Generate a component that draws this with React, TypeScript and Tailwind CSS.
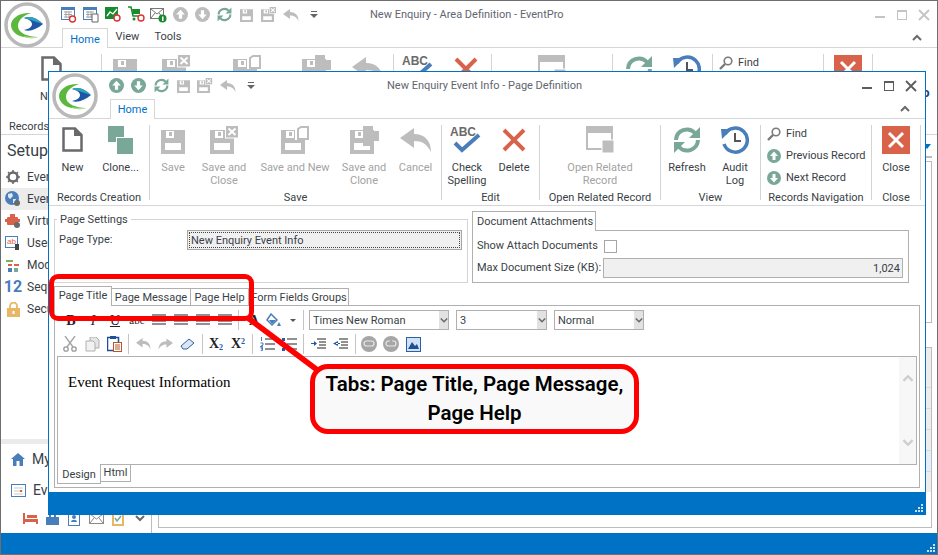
import React from "react";

const GREY = "#bdbdbd";
const TEAL = "#7aa898";
const RED = "#d9634a";
const BLUE = "#4a7ebb";

function Logo() {
  return (
    <svg width="46" height="46" viewBox="0 0 46 46" className="block">
      <circle cx="23" cy="23" r="21" fill="#fff" stroke="#b9b9b9" strokeWidth="3.5" />
      <path d="M27 11C16 10 7 16 7 23C7 32 19 38 34 35C24 35 14 31 14 24C14 18 20 13 27 11Z" fill="#5cb83c" />
      <path d="M19 34C24 37 30 37 34 35C28 35 23 35 19 34Z" fill="#b5dd9f" />
      <path d="M20 16C27 13 34 17 39 22C33 27 26 30 20 28C25 27 28 25 28 22C28 19 24 17 20 16Z" fill="#1f56a6" />
      <path d="M20 16C27 13 34 17 39 22C33 20 27 18 20 16Z" fill="#2fa6b8" />
    </svg>
  );
}

function Floppy({ size = 24, kind = "plain", color = GREY }: { size?: number; kind?: string; color?: string }) {
  const w = kind === "plain" ? 24 : 29;
  return (
    <svg width={(size * w) / 24} height={(size * 28) / 24} viewBox={`0 -4 ${w} 28`} className="block">
      <path fillRule="evenodd" fill={color} d="M0 0H24V24H0ZM5 1V8H13V1ZM4 13V20H20V13Z" />
      <rect x="8" y="2" width="3" height="4" fill={color} />
      {kind === "x" && (
        <g>
          <rect x="15" y="-4.500" width="14" height="13" fill="#fff" />
          <rect x="16" y="-4" width="12" height="11.500" fill={color} />
          <path d="M18.500 -1.500L25.500 5M25.500 -1.500L18.500 5" stroke="#fff" strokeWidth="2" />
        </g>
      )}
      {kind === "doc" && (
        <g>
          <path d="M14 10V-4H29V10Z" fill="#fff" />
          <path d="M17 9V-1L20 -3H27V9Z" fill="#fff" stroke={color} strokeWidth="2" />
        </g>
      )}
      {kind === "plus" && <path d="M13 -4H23V1H29V11H23V16H13V11H19V1H13Z" fill={color} />}
    </svg>
  );
}

function ReplyArrow({ size = 32, color = GREY }: { size?: number; color?: string }) {
  return (
    <svg width={size} height={(size * 24) / 32} viewBox="0 0 32 24" className="block">
      <path d="M14 0L0 10L14 20V13C22 13 27 16 31 24C31 13 25 6 14 6Z" fill={color} />
    </svg>
  );
}

function PageIcon() {
  return (
    <svg width="21" height="25" viewBox="0 0 21 25" className="block">
      <path d="M1.5 1.5H13L19.5 8V23.5H1.5Z" fill="#fff" stroke="#6a6a6a" strokeWidth="2.5" />
      <path d="M12 1L20 9H12Z" fill="#6a6a6a" />
    </svg>
  );
}

function CloneIcon() {
  return (
    <svg width="25" height="28" viewBox="0 0 25 28" className="block">
      <rect x="0" y="0" width="16" height="16" fill={TEAL} />
      <rect x="8" y="11" width="17" height="17" fill="#fff" />
      <rect x="9" y="12" width="16" height="16" fill={TEAL} />
    </svg>
  );
}

function SpellIcon() {
  return (
    <svg width="34" height="28" viewBox="0 0 34 28" className="block">
      <text x="0" y="10" fontFamily="'Liberation Sans',sans-serif" fontWeight="700" fontSize="12" fill="#6a6a6a">ABC</text>
      <path d="M5 17L12 24L29 9" fill="none" stroke={BLUE} strokeWidth="4" />
    </svg>
  );
}

function DeleteIcon() {
  return (
    <svg width="24" height="24" viewBox="0 0 24 24" className="block">
      <path d="M2 2L22 22M22 2L2 22" stroke={RED} strokeWidth="4" />
    </svg>
  );
}

function RelatedIcon() {
  return (
    <svg width="28" height="27" viewBox="0 0 28 27" className="block">
      <rect x="1" y="1" width="25" height="22" fill="#fff" stroke={GREY} strokeWidth="2" />
      <rect x="0" y="0" width="27" height="7" fill={GREY} />
      <rect x="16" y="14" width="12" height="13" fill={GREY} stroke="#fff" />
    </svg>
  );
}

function RefreshIcon({ size = 28, color = TEAL }: { size?: number; color?: string }) {
  return (
    <svg width={size} height={size} viewBox="0 0 28 28" className="block">
      <path d="M3 14A11 11 0 0 1 22 7" fill="none" stroke={color} strokeWidth="4" />
      <path d="M27 1V12H16Z" fill={color} />
      <path d="M25 14A11 11 0 0 1 6 21" fill="none" stroke={color} strokeWidth="4" />
      <path d="M1 27V16H12Z" fill={color} />
    </svg>
  );
}

function AuditIcon() {
  return (
    <svg width="28" height="28" viewBox="0 0 28 28" className="block">
      <path d="M4 8A12 12 0 1 1 3 18" fill="none" stroke={BLUE} strokeWidth="3.5" />
      <path d="M0 3L11 3L1 13Z" fill={BLUE} />
      <path d="M14 7V15H20" fill="none" stroke="#555" strokeWidth="2" />
    </svg>
  );
}

function SearchIcon() {
  return (
    <svg width="14" height="14" viewBox="0 0 14 14" className="block">
      <circle cx="9" cy="5" r="3.8" fill="none" stroke="#7a7a7a" strokeWidth="1.6" />
      <path d="M6 8L1 13" stroke="#7a7a7a" strokeWidth="2.4" />
    </svg>
  );
}

function CircleArrow({ dir, size = 14, color = TEAL }: { dir: "up" | "down"; size?: number; color?: string }) {
  return (
    <svg width={size} height={size} viewBox="0 0 14 14" className="block">
      <circle cx="7" cy="7" r="7" fill={color} />
      <path d={dir === "up" ? "M7 2.5L11 7H8.5V11H5.5V7H3Z" : "M7 11.5L11 7H8.5V3H5.5V7H3Z"} fill="#fff" />
    </svg>
  );
}

function CloseBox() {
  return (
    <svg width="28" height="28" viewBox="0 0 28 28" className="block">
      <rect width="28" height="28" fill={RED} />
      <path d="M7 7L21 21M21 7L7 21" stroke="#fff" strokeWidth="3" />
    </svg>
  );
}

function Chevron({ up = false, className = "", color = "#6a6a6a" }: { up?: boolean; className?: string; color?: string }) {
  return (
    <svg width="10" height="7" viewBox="0 0 10 7" className={className}>
      <path d={up ? "M1 6L5 2L9 6" : "M1 1L5 5L9 1"} fill="none" stroke={color} strokeWidth="2" />
    </svg>
  );
}

function QatDrop() {
  return (
    <svg width="8" height="7" viewBox="0 0 8 7" className="block">
      <rect x="1" y="0" width="6" height="1" fill="#666" />
      <path d="M0 3H8L4 7Z" fill="#666" />
    </svg>
  );
}

function CalendarClock({ form = false }: { form?: boolean }) {
  return (
    <svg width="16" height="17" viewBox="0 0 16 17" className="block">
      <rect x="0.5" y="1.5" width="13" height="12" fill="#fff" stroke={BLUE} />
      <rect x="0" y="1" width="14" height="3" fill={BLUE} />
      <path d="M3 6H11M3 8.500H11M3 11H11M5 5V12M8 5V12" stroke="#a5a5a5" />
      {form ? (
        <path d="M9 8H15V16H9Z" fill="#fff" stroke="#666" />
      ) : (
        <circle cx="11.500" cy="13" r="3" fill="#fff" stroke="#d33" strokeWidth="1.400" />
      )}
    </svg>
  );
}

function GreenChartClock() {
  return (
    <svg width="18" height="17" viewBox="0 0 18 17" className="block">
      <rect x="0" y="1" width="13" height="12" fill="#1a8a2e" />
      <path d="M2 10L5 6L8 8L12 3" fill="none" stroke="#fff" strokeWidth="1.300" />
      <circle cx="12" cy="12" r="3" fill="#fff" stroke="#d33" strokeWidth="1.400" />
    </svg>
  );
}

function CartClock() {
  return (
    <svg width="18" height="17" viewBox="0 0 18 17" className="block">
      <path d="M0 1H3L5 10H12" fill="none" stroke="#1a8a2e" strokeWidth="1.500" />
      <path d="M4 3H12V8H5Z" fill="#1a8a2e" />
      <circle cx="6" cy="13" r="1.500" fill="#1a8a2e" />
      <circle cx="13" cy="12" r="3" fill="#fff" stroke="#d33" strokeWidth="1.400" />
    </svg>
  );
}

function MailBadge() {
  return (
    <svg width="18" height="17" viewBox="0 0 18 17" className="block">
      <rect x="0.500" y="2.500" width="13" height="10" fill="#fff" stroke="#777" />
      <path d="M1 3L7 8L13 3M1 12L5 7M13 12L9 7" fill="none" stroke="#777" />
      <circle cx="12.500" cy="12.500" r="4" fill="#1a8a2e" />
      <rect x="12" y="10.500" width="1.500" height="4.500" fill="#fff" />
    </svg>
  );
}

function Qat({ icons }: { icons: { key: string; w: string; node: React.ReactNode }[] }) {
  return (
    <div className="flex h-full items-center">
      {icons.map((i) => (
        <div key={i.key} className={`flex items-center justify-center ${i.w}`}>
          {i.node}
        </div>
      ))}
    </div>
  );
}

const sharedQat = [
  { key: "up", w: "w-[22px]", node: <CircleArrow dir="up" size={15} /> },
  { key: "down", w: "w-[23px]", node: <CircleArrow dir="down" size={15} /> },
  { key: "ref", w: "w-[22px]", node: <RefreshIcon size={15} /> },
  { key: "save", w: "w-[22px]", node: <Floppy size={13} /> },
  { key: "savex", w: "w-[22px]", node: <Floppy size={13} kind="x" /> },
  { key: "reply", w: "w-[23px]", node: <ReplyArrow size={16} /> },
  { key: "drop", w: "w-[23px]", node: <QatDrop /> },
];

const backQat = [
  { key: "cal", w: "w-[22px]", node: <CalendarClock /> },
  { key: "cal2", w: "w-[22px]", node: <CalendarClock form /> },
  { key: "chart", w: "w-[23px]", node: <GreenChartClock /> },
  { key: "cart", w: "w-[23px]", node: <CartClock /> },
  { key: "mail", w: "w-[21px]", node: <MailBadge /> },
  { key: "up", w: "w-[22px]", node: <CircleArrow dir="up" size={15} color={GREY} /> },
  { key: "down", w: "w-[22px]", node: <CircleArrow dir="down" size={15} color={GREY} /> },
  { key: "ref", w: "w-[22px]", node: <RefreshIcon size={15} /> },
  { key: "save", w: "w-[22px]", node: <Floppy size={13} /> },
  { key: "savex", w: "w-[23px]", node: <Floppy size={13} kind="x" /> },
  { key: "reply", w: "w-[22px]", node: <ReplyArrow size={16} /> },
  { key: "drop", w: "w-[23px]", node: <QatDrop /> },
];

function WinControls({ muted = false }: { muted?: boolean }) {
  const c = muted ? "#c4c4c4" : "#5c5c5c";
  return (
    <div className="flex h-full items-center">
      <svg width="22" height="14" viewBox="0 0 22 14" className="block"><rect x="6" y="8" width="10" height="2" fill={c} /></svg>
      <svg width="22" height="14" viewBox="0 0 22 14" className="block"><rect x="6.500" y="2.500" width="9" height="9" fill="none" stroke={c} /><rect x="6" y="2" width="10" height="2" fill={c} /></svg>
      <svg width="22" height="14" viewBox="0 0 22 14" className="block"><path d="M6 2L16 12M16 2L6 12" stroke={c} strokeWidth="1.800" /></svg>
    </div>
  );
}

function RibbonBtn({ className, icon, label, disabled = false }: { className: string; icon: React.ReactNode; label?: React.ReactNode; disabled?: boolean }) {
  return (
    <div className={`flex h-full flex-col items-center ${className}`}>
      <div className="flex h-[41px] items-center justify-center pb-[2px]">{icon}</div>
      {label && <div className={`text-center leading-[13px] ${disabled ? "text-[#a3a3a3]" : "text-[#3a3f47]"}`}>{label}</div>}
    </div>
  );
}

function Group({ className, label, children }: { className: string; label?: string; children: React.ReactNode }) {
  return (
    <div className={`flex h-full flex-col ${className}`}>
      <div className="flex h-[72px] pt-[1px]">{children}</div>
      {label && <div className="pt-[1px] text-center leading-[14px] text-[#3a3f47]">{label}</div>}
    </div>
  );
}

function Sep() {
  return <div className="mb-[5px] mt-[6px] w-px bg-[#d4d4d4]" />;
}

// the main window's ribbon sits behind the dialog, so only the parts it leaves uncovered get labels
function Ribbon({ behind = false }: { behind?: boolean }) {
  return (
    <div className="flex h-[87px] shrink-0 border-b border-[#d6d6d6]">
      <Group className="w-[100px]" label="Records Creation">
        {behind ? (
          <RibbonBtn className="w-full" icon={<PageIcon />} label="New" />
        ) : (
          <>
            <RibbonBtn className="w-[47px]" icon={<PageIcon />} label="New" />
            <RibbonBtn className="w-[49px]" icon={<CloneIcon />} label="Clone..." />
          </>
        )}
      </Group>
      <Sep />
      <Group className="w-[291px]" label={behind ? undefined : "Save"}>
        <RibbonBtn disabled className="w-[46px]" icon={<Floppy />} label={behind ? undefined : "Save"} />
        <RibbonBtn disabled className="w-[56px]" icon={<Floppy kind="x" />} label={behind ? undefined : <>Save and<br />Close</>} />
        <RibbonBtn disabled className="w-[86px]" icon={<Floppy kind="doc" />} label={behind ? undefined : "Save and New"} />
        <RibbonBtn disabled className="w-[52px]" icon={<Floppy kind="plus" />} label={behind ? undefined : <>Save and<br />Clone</>} />
        <RibbonBtn disabled className="w-[51px]" icon={<ReplyArrow />} label={behind ? undefined : "Cancel"} />
      </Group>
      <Sep />
      <Group className="w-[97px]" label={behind ? undefined : "Edit"}>
        <RibbonBtn className="w-[50px]" icon={<SpellIcon />} label={behind ? undefined : <>Check<br />Spelling</>} />
        <RibbonBtn className="w-[44px]" icon={<DeleteIcon />} label={behind ? undefined : "Delete"} />
      </Group>
      <Sep />
      <Group className="w-[120px]" label={behind ? undefined : "Open Related Record"}>
        <RibbonBtn disabled className="w-full" icon={<RelatedIcon />} label={behind ? undefined : <>Open Related<br />Record</>} />
      </Group>
      <Sep />
      <Group className="w-[99px]" label={behind ? undefined : "View"}>
        <RibbonBtn className="w-[52px]" icon={<RefreshIcon />} label={behind ? undefined : "Refresh"} />
        <RibbonBtn className="w-[44px]" icon={<AuditIcon />} label={behind ? undefined : <>Audit<br />Log</>} />
      </Group>
      <Sep />
      <Group className="w-[110px]" label={behind ? undefined : "Records Navigation"}>
        <div className="flex flex-col pl-[6px] pt-[3px] text-[#3a3f47]">
          <div className="flex h-[22px] items-center gap-[5px]"><SearchIcon />Find</div>
          {!behind && <div className="flex h-[22px] items-center gap-[5px]"><CircleArrow dir="up" />Previous Record</div>}
          {!behind && <div className="flex h-[22px] items-center gap-[5px]"><CircleArrow dir="down" />Next Record</div>}
        </div>
      </Group>
      <Sep />
      <Group className="w-[48px]" label={behind ? undefined : "Close"}>
        <RibbonBtn className="w-full" icon={<CloseBox />} label={behind ? undefined : "Close"} />
      </Group>
      <Sep />
    </div>
  );
}

function SideIcon({ kind }: { kind: string }) {
  if (kind === "gear") {
    return (
      <svg width="14" height="14" viewBox="0 0 14 14" className="block">
        <circle cx="7" cy="7" r="4.500" fill="none" stroke="#6a6a6a" strokeWidth="2.500" />
        <path d="M7 0V14M0 7H14M2 2L12 12M12 2L2 12" stroke="#6a6a6a" strokeWidth="1.500" strokeDasharray="2.500 9 2.500" />
      </svg>
    );
  }
  if (kind === "globe") {
    return (
      <svg width="16" height="16" viewBox="0 0 16 16" className="block">
        <circle cx="7" cy="7" r="7" fill={BLUE} />
        <path d="M3 3L7 2L8 5L5 8L3 6ZM8 8L11 8L10 12L8 12Z" fill="#dfe8f3" />
        <circle cx="12" cy="12" r="3" fill="#6a6a6a" />
      </svg>
    );
  }
  if (kind === "robot") {
    return (
      <svg width="16" height="15" viewBox="0 0 16 15" className="block">
        <rect x="2" y="3" width="11" height="8" rx="1" fill={RED} />
        <rect x="0" y="5" width="15" height="3" fill={RED} />
        <rect x="5" y="0" width="5" height="3" fill={RED} />
        <circle cx="12" cy="11" r="3" fill="#6a6a6a" />
      </svg>
    );
  }
  if (kind === "user") {
    return (
      <svg width="16" height="15" viewBox="0 0 16 15" className="block">
        <rect x="0.500" y="0.500" width="12" height="11" fill="#fff" stroke={BLUE} />
        <text x="2" y="8" fontSize="8" fontFamily="'Liberation Sans',sans-serif" fill={RED}>ab</text>
        <rect x="10" y="8" width="4" height="6" fill="#444" />
      </svg>
    );
  }
  if (kind === "mod") {
    return (
      <svg width="15" height="14" viewBox="0 0 15 14" className="block">
        <path d="M0 3H7" stroke="#7cb35b" strokeWidth="2" />
        <path d="M2 7H6" stroke={RED} strokeWidth="2" />
        <rect x="8" y="6" width="5" height="2" fill={RED} />
        <rect x="2" y="10" width="4" height="4" fill={BLUE} />
        <rect x="8" y="10" width="4" height="4" fill={TEAL} />
      </svg>
    );
  }
  if (kind === "seq") {
    return <span className="text-[16px] font-bold leading-none text-[#4a7ebb]">12</span>;
  }
  return (
    <svg width="13" height="15" viewBox="0 0 13 15" className="block">
      <path d="M3 7V4A3.500 3.500 0 0 1 10 4V7" fill="none" stroke="#e8b766" strokeWidth="1.800" />
      <rect x="0" y="6" width="13" height="9" fill="#e8b766" />
      <rect x="5.500" y="9" width="2" height="3" fill="#fff" />
    </svg>
  );
}

const sideItems = [
  { k: "gear", t: "Even", sel: false },
  { k: "globe", t: "Even", sel: true },
  { k: "robot", t: "Virtu", sel: false },
  { k: "user", t: "User", sel: false },
  { k: "mod", t: "Mod", sel: false },
  { k: "seq", t: "Sequ", sel: false },
  { k: "lock", t: "Secu", sel: false },
];

function Sidebar() {
  return (
    <div className="flex w-[151px] shrink-0 flex-col border-r border-[#bdbdbd]">
      <div className="h-[31px] pl-[6px] pt-[5px] text-[16px] leading-[22px] text-[#3a3f47]">Setup</div>
      {sideItems.map((s) => (
        <div key={s.k} className={`flex h-[22px] items-center gap-[6px] pl-[4px] text-[12px] text-[#3a3f47] ${s.sel ? "bg-[#ececec]" : ""}`}>
          <div className="flex w-[16px] justify-center">
            <SideIcon kind={s.k} />
          </div>
          {s.t}
        </div>
      ))}
      <div className="mt-auto h-[5px] bg-[#ebebeb]" />
      <div className="flex h-[31px] items-center gap-[7px] pl-[10px] text-[14px] text-[#3a3f47]">
        <svg width="14" height="13" viewBox="0 0 14 13" className="block"><path d="M7 0L14 6H12V13H8.500V8H5.500V13H2V6H0Z" fill={BLUE} /></svg>
        My
      </div>
      <div className="flex h-[30px] items-center gap-[7px] pl-[10px] text-[14px] text-[#3a3f47]">
        <svg width="15" height="13" viewBox="0 0 15 13" className="block"><rect x="0.500" y="0.500" width="14" height="12" fill="#fff" stroke={BLUE} /><path d="M3 4H12M3 7H12M3 10H12" stroke="#c9c9c9" /><rect x="9" y="6" width="2" height="2" fill={RED} /></svg>
        Ev
      </div>
      <div className="flex h-[28px] items-center pb-[1px] pl-[18px]">
        <div className="flex w-[22px] justify-center"><svg width="15" height="11" viewBox="0 0 15 11" className="block"><path d="M0 0H2V6H15V11H13V9H2V11H0ZM4 2H14V5H4Z" fill={RED} /></svg></div>
        <div className="flex w-[22px] justify-center"><svg width="13" height="13" viewBox="0 0 13 13" className="block"><path d="M0 5H3V3H5V5H8V3H10V5H13V13H0Z" fill={BLUE} /></svg></div>
        <div className="flex w-[22px] justify-center"><svg width="12" height="14" viewBox="0 0 12 14" className="block"><rect x="0.500" y="0.500" width="11" height="13" fill="#fff" stroke={BLUE} /><circle cx="6" cy="5" r="2" fill={BLUE} /><path d="M3 10C3 7 9 7 9 10Z" fill={BLUE} /></svg></div>
        <div className="flex w-[22px] justify-center"><svg width="15" height="11" viewBox="0 0 15 11" className="block"><rect x="0.500" y="0.500" width="14" height="10" fill="#fff" stroke="#8a8a8a" /><path d="M1 1L7.500 6L14 1M1 10L5 5M14 10L10 5" fill="none" stroke="#8a8a8a" /></svg></div>
        <div className="flex w-[22px] justify-center"><svg width="12" height="15" viewBox="0 0 12 15" className="block"><rect x="1" y="1" width="10" height="13" fill="#fff" stroke="#e8b766" strokeWidth="2" /><path d="M3 7L5 10L9 5" fill="none" stroke={TEAL} strokeWidth="1.500" /></svg></div>
        <div className="flex w-[22px] justify-center"><Chevron /></div>
      </div>
    </div>
  );
}

function RightStrip() {
  return (
    <div className="flex flex-1 flex-col pl-[6px] pr-[5px]">
      <div className="relative h-[23px] shrink-0 border-b-2 border-[#bdbdbd]">
        <div className="absolute right-[1px] top-[9px] h-0 w-0 border-x-[4px] border-t-[5px] border-x-transparent border-t-[#0072c6]" />
      </div>
      <div className="mt-[3px] h-[162px] shrink-0 border border-[#bdbdbd]" />
      <div className="mt-[24px] flex min-h-0 flex-1 flex-col overflow-hidden border border-[#bdbdbd] bg-white">
        <div className="h-[39px] shrink-0 bg-[#ededed]" />
        {["bg-[#ededed]", "bg-[#ededed]", "bg-[#ededed]", "bg-[#e4eefa]", "bg-[#ededed]"].map((bg, i) => (
          <div key={i} className={`h-[21px] shrink-0 border-t border-[#d8d8d8] ${bg}`} />
        ))}
      </div>
      <div className="h-[5px] shrink-0" />
    </div>
  );
}

function Grip() {
  return (
    <svg width="9" height="9" viewBox="0 0 9 9" className="block">
      <path d="M6 0H8V2H6ZM3 3H5V5H3ZM6 3H8V5H6ZM0 6H2V8H0ZM3 6H5V8H3ZM6 6H8V8H6Z" fill="#cfe0ef" />
    </svg>
  );
}

function ToolCell({ w = "w-[22px]", children }: { w?: string; children: React.ReactNode }) {
  return <div className={`flex h-full items-center justify-center ${w}`}>{children}</div>;
}

function ToolSep({ className }: { className: string }) {
  return <div className={`h-[20px] w-px bg-[#c4c4c4] ${className}`} />;
}

function AlignIcon() {
  return (
    <svg width="14" height="12" viewBox="0 0 14 12" className="block">
      <path d="M0 1H14M2 4H12M0 7H14M0 10H14" stroke="#222" />
    </svg>
  );
}

function Select({ className, value }: { className: string; value: string }) {
  return (
    <div className={`flex h-[20px] border border-[#b0b0b0] ${className}`}>
      <div className="flex-1 pl-[3px] leading-[20px] text-[#3a3f47]">{value}</div>
      <div className="flex w-[9px] items-center justify-center bg-[#e2e2e2]">
        <Chevron className="w-[8px]" />
      </div>
    </div>
  );
}

function FormatBar() {
  const serif = "font-['Liberation_Serif',serif]";
  return (
    <div className={`flex h-[20px] items-center pl-[5px] text-[#222]`}>
      <ToolCell><b className={`text-[14px] ${serif}`}>B</b></ToolCell>
      <ToolCell><i className={`text-[14px] ${serif}`}>I</i></ToolCell>
      <ToolCell><u className={`text-[14px] ${serif}`}>U</u></ToolCell>
      <ToolCell><s className={`text-[11px] ${serif}`}>abc</s></ToolCell>
      <ToolCell><AlignIcon /></ToolCell>
      <ToolCell><AlignIcon /></ToolCell>
      <ToolCell><AlignIcon /></ToolCell>
      <ToolCell><AlignIcon /></ToolCell>
      <ToolSep className="ml-[2px]" />
      <ToolCell w="w-[20px] ml-[5px]"><b className={`text-[14px] ${serif}`}>A</b></ToolCell>
      <ToolCell w="w-[19px]">
        <svg width="15" height="15" viewBox="0 0 15 15" className="block"><path d="M5 1L11 7L6 12L1 7Z" fill="#fff" stroke={BLUE} strokeWidth="1.500" /><path d="M3 7H10L6 11Z" fill={BLUE} /><path d="M13 9L15 13H11Z" fill={BLUE} /></svg>
      </ToolCell>
      <ToolCell w="w-[20px]"><div className="h-0 w-0 border-x-[3px] border-t-[3px] border-x-transparent border-t-[#555]" /></ToolCell>
      <ToolSep className="" />
      <Select className="ml-[5px] w-[140px]" value="Times New Roman" />
      <Select className="ml-[7px] w-[91px]" value="3" />
      <Select className="ml-[7px] w-[90px]" value="Normal" />
    </div>
  );
}

function ListIcon({ numbered }: { numbered: boolean }) {
  return (
    <svg width="15" height="14" viewBox="0 0 15 14" className="block">
      {numbered ? (
        <path d="M1.500 0V4M1 9L3 9M0.500 6H3V8L0.500 9.500V10H3M0.500 11H3L1.500 12L3 13L0.500 14" fill="none" stroke="#1f5aa8" strokeWidth="0.800" />
      ) : (
        <path d="M0 1H3V4H0ZM0 6H3V9H0ZM0 11H3V14H0Z" fill="#1f5aa8" />
      )}
      <path d="M5 2H15M5 7H15M5 12H15" stroke="#222" />
    </svg>
  );
}

function IndentIcon({ out = false }: { out?: boolean }) {
  return (
    <svg width="15" height="12" viewBox="0 0 15 12" className="block">
      <path d="M6 1H15M8 4H15M8 7H15M6 10H15" stroke="#222" />
      <path d={out ? "M5 3L0 5.500L5 8ZM3 5H7V6H3Z" : "M0 5H3V3L6 5.500L3 8V6H0Z"} fill="#1f5aa8" />
    </svg>
  );
}

function LinkIcon({ broken = false }: { broken?: boolean }) {
  return (
    <svg width="16" height="16" viewBox="0 0 16 16" className="block">
      <circle cx="8" cy="8" r="8" fill="#a6a6a6" />
      <rect x="3" y="5" width="10" height="5" rx="2.500" fill="none" stroke="#e8e8e8" strokeWidth="1.200" />
      {broken && <path d="M8 3V7" stroke="#a6a6a6" strokeWidth="2" />}
    </svg>
  );
}

function ActionBar() {
  return (
    <div className="flex h-[20px] items-center pl-[4px]">
      <ToolCell>
        <svg width="16" height="16" viewBox="0 0 16 16" className="block">
          <circle cx="4" cy="13" r="2.200" fill="none" stroke="#9a9a9a" strokeWidth="1.300" />
          <circle cx="12" cy="13" r="2.200" fill="none" stroke="#9a9a9a" strokeWidth="1.300" />
          <path d="M5 11L13 0M11 11L3 0" stroke="#a6a6a6" strokeWidth="1.400" />
        </svg>
      </ToolCell>
      <ToolCell>
        <svg width="15" height="15" viewBox="0 0 15 15" className="block">
          <path d="M5 0H11L14 3V11H5Z" fill="#e4e4e4" stroke="#b0b0b0" />
          <path d="M1 4H8L10 6V14H1Z" fill="#f2f2f2" stroke="#b0b0b0" />
        </svg>
      </ToolCell>
      <ToolCell>
        <svg width="15" height="16" viewBox="0 0 15 16" className="block">
          <rect x="0.500" y="1.500" width="11" height="13" fill="#fff" stroke="#1f4f96" strokeWidth="1.500" />
          <rect x="3" y="0" width="6" height="3" fill="#1f4f96" />
          <rect x="6.500" y="6.500" width="8" height="9" fill="#fff" stroke="#b5562a" />
          <path d="M8 9H13M8 11H13M8 13H13" stroke="#b5562a" />
        </svg>
      </ToolCell>
      <ToolSep className="ml-[3px]" />
      <ToolCell w="w-[22px] ml-[3px]"><ReplyArrow size={15} color="#bdbdbd" /></ToolCell>
      <ToolCell>
        <svg width="15" height="12" viewBox="0 0 32 24" className="block"><path d="M18 0L32 10L18 20V13C10 13 5 16 1 24C1 13 7 6 18 6Z" fill="#bdbdbd" /></svg>
      </ToolCell>
      <ToolCell>
        <svg width="15" height="12" viewBox="0 0 15 12" className="block"><path d="M9 1L14 5L7 11H3L1 8Z" fill="#dbe6f4" stroke="#2d5fa5" /></svg>
      </ToolCell>
      <ToolSep className="ml-[4px]" />
      <ToolCell w="w-[22px] ml-[2px]"><span className="font-['Liberation_Serif',serif] text-[14px] font-bold leading-none text-[#222]">X<sub className="text-[8px] text-[#1f5aa8]">2</sub></span></ToolCell>
      <ToolCell><span className="font-['Liberation_Serif',serif] text-[14px] font-bold leading-none text-[#222]">X<sup className="text-[8px] text-[#1f5aa8]">2</sup></span></ToolCell>
      <ToolSep className="ml-[3px]" />
      <ToolCell w="w-[22px] ml-[3px]"><ListIcon numbered /></ToolCell>
      <ToolCell><ListIcon numbered={false} /></ToolCell>
      <ToolSep className="ml-[3px]" />
      <ToolCell w="w-[22px] ml-[3px]"><IndentIcon /></ToolCell>
      <ToolCell><IndentIcon out /></ToolCell>
      <ToolSep className="ml-[4px]" />
      <ToolCell w="w-[22px] ml-[2px]"><LinkIcon /></ToolCell>
      <ToolCell><LinkIcon broken /></ToolCell>
      <ToolCell>
        <svg width="15" height="15" viewBox="0 0 15 15" className="block">
          <rect x="0.500" y="0.500" width="14" height="14" fill="#cfe3f5" stroke="#2d5fa5" />
          <path d="M2 12L6 5L9 9L11 7L13 12Z" fill="#1f4f96" />
        </svg>
      </ToolCell>
    </div>
  );
}

function PageEditor() {
  return (
    <div className="ml-[5px] h-[183px] w-[866px] shrink-0 border border-[#b0b0b0]">
      <div className="mt-[4px]"><FormatBar /></div>
      <div className="mt-[4px]"><ActionBar /></div>
      <div className="ml-[2px] mt-[2px] flex h-[109px] w-[860px] border border-[#b0b0b0]">
        <div className="flex-1 pl-[10px] pt-[15px] font-['Liberation_Serif',serif] text-[15px] leading-[20px] text-[#000]">
          Event Request Information
        </div>
        <div className="flex w-[17px] flex-col items-center justify-between bg-[#f7f7f7] pb-[17px] pt-[17px]">
          <Chevron up color="#cdcdcd" className="h-[8px] w-[12px]" />
          <Chevron color="#cdcdcd" className="h-[8px] w-[12px]" />
        </div>
      </div>
      <div className="ml-[2px] flex items-start">
        <div className="-mt-px h-[20px] w-[44px] border-x border-b border-[#b0b0b0] bg-white pt-[1px] text-center leading-[19px] text-[#3a3f47]">Design</div>
        <div className="-mt-px h-[18px] w-[30px] border-b border-r border-[#b0b0b0] text-center leading-[18px] text-[#3a3f47]">Html</div>
      </div>
    </div>
  );
}

function PageForm() {
  return (
    <div className="flex items-start pl-[5px] pt-[5px] text-[#3a3f47]">
      <div className="relative mt-[8px] h-[64px] w-[414px] border border-[#d4d4d4]">
        <div className="absolute -top-[8px] left-[2px] bg-white px-[3px] leading-[15px]">Page Settings</div>
        <div className="flex items-center pl-[4px] pt-[10px]">
          <div className="w-[128px] pt-[1px]">Page Type:</div>
          <div className="flex h-[20px] w-[275px] items-center border border-[#a6a6a6] bg-[#f0f0f0] p-[1px]">
            <div className="h-full w-full border border-dotted border-[#444] pl-[1px] leading-[15px]">New Enquiry Event Info</div>
          </div>
        </div>
      </div>
      <div className="ml-[4px] w-[437px]">
        <div className="relative z-10 -mb-px h-[20px] w-[124px] border-x border-t border-[#b0b0b0] bg-white pl-[4px] leading-[20px]">Document Attachments</div>
        <div className="h-[53px] border border-[#b0b0b0] pl-[4px]">
          <div className="flex h-[27px] items-center pt-[3px]">
            <div className="w-[127px] pt-[1px]">Show Attach Documents</div>
            <div className="h-[13px] w-[13px] border border-[#a6a6a6]" />
          </div>
          <div className="flex h-[20px] items-center">
            <div className="w-[126px] pt-[1px]">Max Document Size (KB):</div>
            <div className="h-[20px] w-[300px] border border-[#b0b0b0] bg-[#f0f0f0] pr-[2px] text-right leading-[20px]">1,024</div>
          </div>
        </div>
      </div>
    </div>
  );
}

function TabStrip() {
  return (
    <div className="mt-[3px] flex h-[19px] items-end pl-[5px] text-[#3a3f47]">
      <div className="relative z-10 -mb-px h-[20px] w-[58px] border-x border-t border-[#b0b0b0] bg-white text-center leading-[17px]">Page Title</div>
      <div className="h-[17px] w-[79px] border-r border-t border-[#b0b0b0] text-center leading-[17px]">Page Message</div>
      <div className="h-[17px] w-[58px] border-r border-t border-[#b0b0b0] text-center leading-[17px]">Page Help</div>
      <div className="h-[17px] w-[100px] border-r border-t border-[#b0b0b0] pl-[1px] text-center leading-[17px]">Form Fields Groups</div>
    </div>
  );
}

function StatusBar({ className }: { className: string }) {
  return (
    <div className={`flex shrink-0 items-end justify-end bg-[#0072c6] pb-[1px] pr-[1px] ${className}`}>
      <Grip />
    </div>
  );
}

function Callouts() {
  return (
    <>
      <svg width="938" height="555" viewBox="0 0 938 555" className="pointer-events-none absolute left-0 top-0">
        <path d="M248 318L328 378" stroke="#ff0000" strokeWidth="5.500" />
      </svg>
      <div className="absolute left-[49px] top-[274px] h-[47px] w-[205px] rounded-[9px] border-[5px] border-[#ff0000]" />
      <div className="absolute left-[310px] top-[364px] flex h-[70px] w-[329px] flex-col items-center justify-center rounded-[18px] border-[5px] border-[#ff0000] bg-[#f9f9f9] text-center text-[20.500px] font-semibold leading-[29px] text-[#000]">
        <div>Tabs: Page Title, Page Message,</div>
        <div>Page Help</div>
      </div>
    </>
  );
}

export default function App() {
  return (
    <div className="relative h-[555px] w-[938px] overflow-hidden whitespace-nowrap bg-white font-['Roboto',sans-serif] text-[11px]">
      {/* main window behind */}
      <div className="flex h-full w-full flex-col border border-[#6e6e6e]">
        <div className="relative flex h-[27px] shrink-0">
          <div className="absolute left-[3px] top-[1px] z-10"><Logo /></div>
          <div className="pl-[57px]"><Qat icons={backQat} /></div>
          <div className="absolute left-[369px] top-[6px] text-[#5f6670]">New Enquiry - Area Definition - EventPro</div>
          <div className="absolute right-[2px] top-0 h-full"><WinControls muted /></div>
        </div>
        <div className="flex h-[20px] shrink-0 items-end border-b border-[#d6d6d6] pl-[61px] text-[#3a3f47]">
          <div className="-mb-px h-[20px] w-[46px] border-x border-t border-[#d6d6d6] bg-white text-center leading-[21px] text-[#0072c6]">Home</div>
          <div className="w-[39px] text-center leading-[21px]">View</div>
          <div className="w-[42px] text-center leading-[21px]">Tools</div>
          <div className="ml-auto flex h-full items-center pr-[15px]"><Chevron up /></div>
        </div>
        <div className="relative">
          <Ribbon behind />
          <div className="absolute left-[876px] top-[35px] whitespace-nowrap text-[13px] font-bold text-[#1f3f7f]">EventPro</div>
        </div>
        <div className="flex min-h-0 flex-1">
          <Sidebar />
          <RightStrip />
        </div>
        <StatusBar className="h-[21px]" />
      </div>

      {/* page definition window */}
      <div className="absolute left-[48px] top-[71px] flex h-[444px] w-[878px] flex-col border border-[#0072c6] bg-white">
        <div className="relative flex h-[27px] shrink-0">
          <div className="absolute left-[3px] top-[1px] z-10"><Logo /></div>
          <div className="pl-[56px]"><Qat icons={sharedQat} /></div>
          <div className="absolute left-[338px] top-[6px] text-[#5f6670]">New Enquiry Event Info - Page Definition</div>
          <div className="absolute right-[3px] top-0 h-full"><WinControls /></div>
        </div>
        <div className="flex h-[20px] shrink-0 items-end border-b border-[#d6d6d6] pl-[61px]">
          <div className="-mb-px h-[20px] w-[45px] border-x border-t border-[#d6d6d6] bg-white text-center leading-[20px] text-[#0072c6]">Home</div>
          <div className="ml-auto flex h-full items-center pr-[15px]"><Chevron up /></div>
        </div>
        <Ribbon />
        <PageForm />
        <TabStrip />
        <PageEditor />
        <StatusBar className="mt-auto h-[22px]" />
      </div>

      <Callouts />
    </div>
  );
}
